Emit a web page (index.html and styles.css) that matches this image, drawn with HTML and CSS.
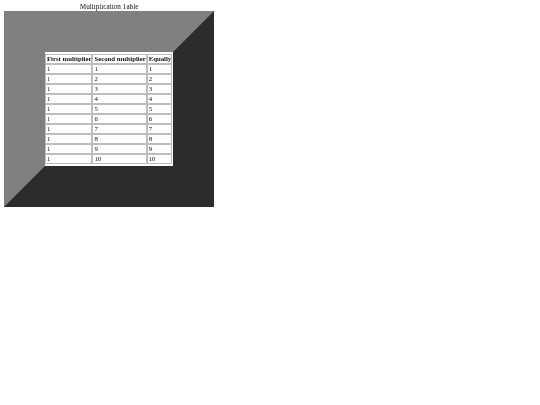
FILE: index.html
```html
<!DOCTYPE html>
<html>
<head>
<meta charset="utf-8">
<title>Multiplication Table</title>
<link rel="stylesheet" href="styles.css">
</head>
<body class="page">
<table class="mult">
<caption class="mult-caption">Multiplication Table</caption>
<thead>
<tr><th class="head">First multiplier</th><th class="head">Second multiplier</th><th class="head">Equally</th></tr>
</thead>
<tbody>
<tr><td class="cell">1</td><td class="cell">1</td><td class="cell">1</td></tr>
<tr><td class="cell">1</td><td class="cell">2</td><td class="cell">2</td></tr>
<tr><td class="cell">1</td><td class="cell">3</td><td class="cell">3</td></tr>
<tr><td class="cell">1</td><td class="cell">4</td><td class="cell">4</td></tr>
<tr><td class="cell">1</td><td class="cell">5</td><td class="cell">5</td></tr>
<tr><td class="cell">1</td><td class="cell">6</td><td class="cell">6</td></tr>
<tr><td class="cell">1</td><td class="cell">7</td><td class="cell">7</td></tr>
<tr><td class="cell">1</td><td class="cell">8</td><td class="cell">8</td></tr>
<tr><td class="cell">1</td><td class="cell">9</td><td class="cell">9</td></tr>
<tr><td class="cell">1</td><td class="cell">10</td><td class="cell">10</td></tr>
</tbody>
</table>
</body>
</html>
```
FILE: styles.css
```css
html {
  background: #ffffff;
}
.page {
  margin: 4px;
  font-family: "Liberation Serif", "Times New Roman", serif;
  font-size: 6.75px;
  line-height: 7px;
  color: #111111;
  will-change: transform;
}
.mult {
  border: 41px outset gray;
  border-spacing: 0;
  padding: 2px 1px 2px 0;
  background: #ffffff;
}
.mult-caption {
  text-align: center;
  font-size: 7.2px;
  line-height: 7px;
}
.head,
.cell {
  border: 1px solid #bdbdbd;
  padding: 0 0 0 1px;
  line-height: 8px;
}
.head {
  font-weight: bold;
  text-align: center;
}
.cell {
  text-align: left;
}
```
